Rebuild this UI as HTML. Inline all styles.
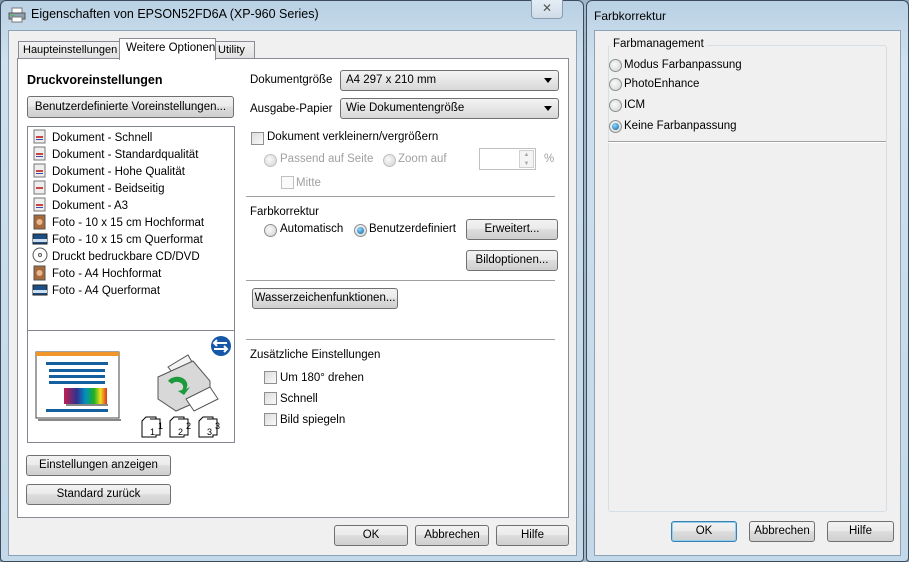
<!DOCTYPE html>
<html><head><meta charset="utf-8"><style>
*{box-sizing:border-box;margin:0;padding:0}
body{width:909px;height:562px;position:relative;overflow:hidden;background:#6a8aa8;font-family:"Liberation Sans","DejaVu Sans",sans-serif;font-size:11.5px;color:#000}
.a{position:absolute;white-space:nowrap}
.win{position:absolute;border:1px solid #3c4c5c;border-radius:6px 6px 4px 4px;background:linear-gradient(#b9d1e4,#cfe0ee 60px,#c3d8e8);}
.client{position:absolute;background:#f0f0f0;border:1px solid #8da2b6}
.btn{position:absolute;border:1px solid #707070;border-radius:3px;background:linear-gradient(#f2f2f2 0,#ebebeb 45%,#dddddd 50%,#cfcfcf 100%);text-align:center;line-height:19px;font-size:11.5px}
.cb{position:absolute;width:13px;height:13px;border:1px solid #8e8f8f;background:linear-gradient(135deg,#dcdcdc,#fafafa)}
.rb{position:absolute;width:13px;height:13px;border:1px solid #8e8f8f;border-radius:50%;background:radial-gradient(circle at 40% 40%,#fafafa,#d0d0d0);margin-top:1px}
.rb.on::after{content:"";position:absolute;left:2px;top:2px;width:7px;height:7px;border-radius:50%;background:radial-gradient(circle at 40% 35%,#8fd8ff,#0a5fa0)}
.dis{color:#a0a0a0}
.sel{position:absolute;border:1px solid #707070;border-radius:3px;background:linear-gradient(#f4f4f4,#e6e6e6 50%,#d8d8d8);height:21px;padding-left:5px;line-height:19px}
.sel::after{content:"";position:absolute;right:6px;top:7px;border:4px solid transparent;border-top:5px solid #000}
.hr{position:absolute;height:2px;border-top:1px solid #a0a0a0;border-bottom:1px solid #fff}
.tab{position:absolute;font-size:11px}
</style></head><body>
<div class="a" style="left:0;top:0;width:909px;height:562px;background:linear-gradient(90deg,#7c95ae,#a8bfd2 50%,#8aa5bf)"></div>

<!-- left window -->
<div class="win" style="left:0;top:0;width:584px;height:562px">
 <svg class="a" style="left:7px;top:6px" width="18" height="16"><rect x="4" y="1" width="10" height="5" fill="#fff" stroke="#777"/><rect x="1" y="6" width="16" height="6" fill="#8ea0b0" stroke="#555"/><rect x="4" y="10" width="10" height="5" fill="#fff" stroke="#777"/><rect x="3" y="8" width="3" height="1" fill="#3c3"/></svg>
 <div class="a" style="left:30px;top:6px;font-size:12.5px">Eigenschaften von EPSON52FD6A (XP-960 Series)</div>
 <div class="a" style="left:530px;top:-1px;width:32px;height:19px;border:1px solid #8a9cb0;border-top:none;border-radius:0 0 4px 4px;background:linear-gradient(#e4edf5,#cfdde9);text-align:center;font-size:12px;line-height:17px;color:#555">✕</div>
 <div class="client" style="left:7px;top:29px;width:569px;height:526px">
  <div class="a tab" style="left:9px;top:10px;width:103px;height:19px;border:1px solid #898c95;background:linear-gradient(#f2f2f2,#e0e0e0);padding-left:4px;line-height:17px">Haupteinstellungen</div>
  <div class="a tab" style="left:205px;top:10px;width:41px;height:19px;border:1px solid #898c95;background:linear-gradient(#f2f2f2,#e0e0e0);padding-left:3px;line-height:17px">Utility</div>
  <div class="a" style="left:8px;top:27px;width:552px;height:460px;border:1px solid #898c95;background:#fff"></div>
  <div class="a tab" style="left:110px;top:7px;width:97px;height:22px;border:1px solid #898c95;border-bottom:none;background:#fff;padding-left:6px;line-height:19px;font-size:11.5px">Weitere Optionen</div>
 </div>
</div>

<div class="a" style="left:27px;top:73px;font-weight:bold;font-size:12.5px">Druckvoreinstellungen</div>
<div class="btn" style="left:27px;top:96px;width:207px;height:22px;line-height:20px">Benutzerdefinierte Voreinstellungen...</div>
<div class="a" style="left:27px;top:126px;width:208px;height:317px;border:1px solid #828790;background:#fff"></div>
<div class="a" style="left:27px;top:330px;width:208px;height:1px;background:#828790"></div>
<div class="a" style="left:52px;top:130px;line-height:17px">Dokument - Schnell<br>Dokument - Standardqualität<br>Dokument - Hohe Qualität<br>Dokument - Beidseitig<br>Dokument - A3<br>Foto - 10 x 15 cm Hochformat<br>Foto - 10 x 15 cm Querformat<br>Druckt bedruckbare CD/DVD<br>Foto - A4 Hochformat<br>Foto - A4 Querformat</div>
<svg class="a" style="left:32px;top:128px" width="16" height="175">
 <g fill="#eee" stroke="#777"><rect x="2" y="2" width="11" height="13"/><rect x="2" y="19" width="11" height="13"/><rect x="2" y="36" width="11" height="13"/><rect x="2" y="53" width="11" height="13"/><rect x="2" y="70" width="11" height="13"/></g>
 <g fill="#c44"><rect x="4" y="8" width="7" height="2"/><rect x="4" y="25" width="7" height="2"/><rect x="4" y="42" width="7" height="2"/><rect x="4" y="59" width="7" height="2"/><rect x="4" y="76" width="7" height="2"/></g>
 <g fill="#44a"><rect x="4" y="11" width="7" height="1"/><rect x="4" y="28" width="7" height="1"/><rect x="4" y="45" width="7" height="1"/><rect x="4" y="79" width="7" height="1"/></g>
 <rect x="2" y="87" width="11" height="14" fill="#a86a3a" stroke="#555"/><circle cx="7.5" cy="94" r="3" fill="#e8b890"/>
 <rect x="1" y="106" width="14" height="10" fill="#1b4f86" stroke="#222"/><rect x="1" y="111" width="14" height="3" fill="#cde"/>
 <circle cx="8" cy="127" r="7" fill="#fff" stroke="#555"/><circle cx="8" cy="127" r="1.5" fill="none" stroke="#555"/>
 <rect x="2" y="138" width="11" height="14" fill="#a86a3a" stroke="#555"/><circle cx="7.5" cy="145" r="3" fill="#e8b890"/>
 <rect x="1" y="157" width="14" height="10" fill="#1b4f86" stroke="#222"/><rect x="1" y="162" width="14" height="3" fill="#cde"/>
</svg>
<svg class="a" style="left:28px;top:331px" width="206" height="111">
 <rect x="8" y="21" width="83" height="66" fill="#fff" stroke="#444"/><rect x="10" y="88" width="83" height="2" fill="#888"/><rect x="8" y="21" width="83" height="4" fill="#f0962a"/>
 <g fill="#1560a0"><rect x="18" y="31" width="62" height="3"/><rect x="21" y="38" width="56" height="3"/><rect x="21" y="44" width="56" height="3"/><rect x="21" y="50" width="56" height="3"/><rect x="18" y="78" width="62" height="3"/></g>
 <defs><linearGradient id="rb"><stop offset="0" stop-color="#c02050"/><stop offset=".3" stop-color="#303090"/><stop offset=".5" stop-color="#0090c0"/><stop offset=".7" stop-color="#20b020"/><stop offset=".85" stop-color="#f0e020"/><stop offset="1" stop-color="#e03020"/></linearGradient></defs>
 <rect x="36" y="57" width="43" height="16" fill="url(#rb)"/><rect x="38" y="73" width="42" height="2" fill="#888"/>
 <path d="M140 36 L160 24 L168 38 L148 46Z" fill="#f4f4f4" stroke="#555"/>
 <path d="M130 46 L165 30 L182 50 L182 65 L148 80 L130 68Z" fill="#d8d8d8" stroke="#555"/>
 <path d="M158 68 L182 56 L190 68 L166 80Z" fill="#fff" stroke="#555"/>
 <path d="M140 50 a10 8 0 1 1 18 8 l4 -2 -6 8 -6 -4 4 -1 a6 5 0 1 0 -10 -6z" fill="#1c9a3c"/>
 <circle cx="193" cy="15" r="10" fill="#1558a8"/><path d="M186 12h13M189 9l-3 3 3 3M186 18h13M196 15l3 3-3 3" stroke="#fff" stroke-width="2" fill="none"/>
 <g fill="#fff" stroke="#000"><path d="M118 86h10v20h-14v-16z"/><path d="M122 88h10v16h-4"/><path d="M146 86h10v20h-14v-16z"/><path d="M150 88h10v16h-4"/><path d="M175 86h10v20h-14v-16z"/><path d="M179 88h10v16h-4"/></g>
 <g font-size="9" font-family="Liberation Sans"><text x="122" y="104">1</text><text x="130" y="98">1</text><text x="150" y="104">2</text><text x="158" y="98">2</text><text x="179" y="104">3</text><text x="187" y="98">3</text></g>
</svg>
<div class="btn" style="left:26px;top:455px;width:145px;height:21px">Einstellungen anzeigen</div>
<div class="btn" style="left:26px;top:484px;width:145px;height:21px">Standard zurück</div>

<div class="a" style="left:250px;top:74px">Dokumentgröße</div>
<div class="sel" style="left:340px;top:70px;width:219px">A4 297 x 210 mm</div>
<div class="a" style="left:250px;top:103px">Ausgabe-Papier</div>
<div class="sel" style="left:340px;top:98px;width:219px">Wie Dokumentengröße</div>
<div class="cb" style="left:251px;top:132px"></div><div class="a" style="left:267px;top:131px">Dokument verkleinern/vergrößern</div>
<div class="rb" style="left:264px;top:153px;border-color:#c0c0c0"></div><div class="a dis" style="left:280px;top:153px">Passend auf Seite</div>
<div class="rb" style="left:383px;top:153px;border-color:#c0c0c0"></div><div class="a dis" style="left:398px;top:153px">Zoom auf</div>
<div class="a" style="left:479px;top:148px;width:57px;height:22px;border:1px solid #c0c0c0;background:#fff"></div>
<div class="a" style="left:519px;top:150px;width:15px;height:18px;border:1px solid #d0d0d0;background:#f4f4f4;font-size:6px;color:#aaa;text-align:center;line-height:9px">▲<br>▼</div>
<div class="a dis" style="left:544px;top:153px">%</div>
<div class="cb" style="left:281px;top:176px;border-color:#c0c0c0;background:#fafafa"></div><div class="a dis" style="left:296px;top:177px">Mitte</div>
<div class="hr" style="left:246px;top:196px;width:309px"></div>
<div class="a" style="left:250px;top:206px">Farbkorrektur</div>
<div class="rb" style="left:264px;top:223px"></div><div class="a" style="left:280px;top:223px">Automatisch</div>
<div class="rb on" style="left:354px;top:223px"></div><div class="a" style="left:369px;top:223px">Benutzerdefiniert</div>
<div class="btn" style="left:466px;top:219px;width:92px;height:21px">Erweitert...</div>
<div class="btn" style="left:466px;top:250px;width:92px;height:21px">Bildoptionen...</div>
<div class="hr" style="left:246px;top:280px;width:309px"></div>
<div class="btn" style="left:252px;top:288px;width:146px;height:21px">Wasserzeichenfunktionen...</div>
<div class="hr" style="left:246px;top:339px;width:309px"></div>
<div class="a" style="left:250px;top:349px">Zusätzliche Einstellungen</div>
<div class="cb" style="left:264px;top:371px"></div><div class="a" style="left:280px;top:372px">Um 180° drehen</div>
<div class="cb" style="left:264px;top:392px"></div><div class="a" style="left:280px;top:393px">Schnell</div>
<div class="cb" style="left:264px;top:413px"></div><div class="a" style="left:280px;top:414px">Bild spiegeln</div>
<div class="btn" style="left:334px;top:525px;width:74px;height:21px">OK</div>
<div class="btn" style="left:415px;top:525px;width:74px;height:21px">Abbrechen</div>
<div class="btn" style="left:496px;top:525px;width:73px;height:21px">Hilfe</div>

<div class="win" style="left:586px;top:0;width:323px;height:562px">
 <div class="a" style="left:7px;top:8px;font-size:12px">Farbkorrektur</div>
 <div class="client" style="left:7px;top:29px;width:307px;height:526px"></div>
</div>
<div class="a" style="left:608px;top:45px;width:279px;height:467px;border:1px solid #d5dfe5;border-radius:3px"></div>
<div class="a" style="left:610px;top:38px;background:#f0f0f0;padding:0 3px">Farbmanagement</div>
<div class="rb" style="left:609px;top:58px"></div><div class="a" style="left:624px;top:59px">Modus Farbanpassung</div>
<div class="rb" style="left:609px;top:77px"></div><div class="a" style="left:624px;top:78px">PhotoEnhance</div>
<div class="rb" style="left:609px;top:98px"></div><div class="a" style="left:624px;top:99px">ICM</div>
<div class="rb on" style="left:609px;top:119px"></div><div class="a" style="left:624px;top:120px">Keine Farbanpassung</div>
<div class="hr" style="left:608px;top:141px;width:278px"></div>
<div class="btn" style="left:671px;top:521px;width:66px;height:21px;border-color:#3c7fb1;box-shadow:inset 0 0 0 1px #8fd0f0">OK</div>
<div class="btn" style="left:749px;top:521px;width:66px;height:21px">Abbrechen</div>
<div class="btn" style="left:827px;top:521px;width:67px;height:21px">Hilfe</div>
</body></html>
